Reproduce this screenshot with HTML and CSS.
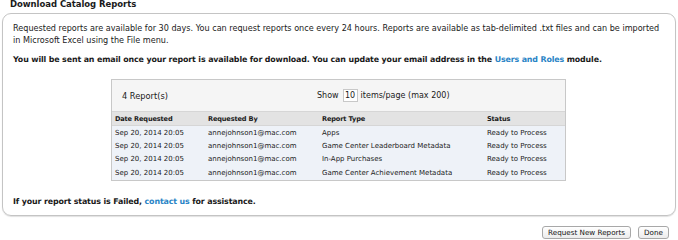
FILE: index.html
```html
<!DOCTYPE html>
<html>
<head>
<meta charset="utf-8">
<link rel="stylesheet" href="styles.css">
</head>
<body>
<h1 class="title">Download Catalog Reports</h1>
<div class="box">
  <p class="intro">Requested reports are available for 30 days. You can request reports once every 24 hours. Reports are available as tab-delimited .txt files and can be imported in Microsoft Excel using the File menu.</p>
  <p class="strong">You will be sent an email once your report is available for download. You can update your email address in the <a class="link" href="#">Users and Roles</a> module.</p>
  <div class="panel">
    <div class="panel-head">
      <span class="count">4 Report(s)</span>
      <span class="pager">Show <span class="input">10</span> items/page (max 200)</span>
    </div>
    <table class="grid">
      <thead>
        <tr><th class="c1">Date Requested</th><th class="c2">Requested By</th><th class="c3">Report Type</th><th class="c4">Status</th></tr>
      </thead>
      <tbody>
        <tr><td>Sep 20, 2014 20:05</td><td>annejohnson1@mac.com</td><td>Apps</td><td>Ready to Process</td></tr>
        <tr><td>Sep 20, 2014 20:05</td><td>annejohnson1@mac.com</td><td>Game Center Leaderboard Metadata</td><td>Ready to Process</td></tr>
        <tr><td>Sep 20, 2014 20:05</td><td>annejohnson1@mac.com</td><td>In-App Purchases</td><td>Ready to Process</td></tr>
        <tr><td>Sep 20, 2014 20:05</td><td>annejohnson1@mac.com</td><td>Game Center Achievement Metadata</td><td>Ready to Process</td></tr>
      </tbody>
    </table>
  </div>
  <p class="strong foot">If your report status is Failed, <a class="link" href="#">contact us</a> for assistance.</p>
</div>
<div class="actions">
  <button class="btn">Request New Reports</button>
  <button class="btn">Done</button>
</div>
</body>
</html>
```
FILE: styles.css
```css
html, body {
  margin: 0;
  padding: 0;
  background: #ffffff;
}
body {
  font-family: "DejaVu Sans", "Liberation Sans", sans-serif;
  font-size: 8.1px;
  color: #1a1a1a;
  width: 678px;
  height: 239px;
  overflow: hidden;
}
.title {
  font-size: 8.5px;
  font-weight: bold;
  letter-spacing: -0.05px;
  margin: 0 0 0 10px;
  line-height: 9px;
  height: 13px;
}
.box {
  margin: 0 2px;
  border: 1px solid #c4c4c4;
  border-radius: 9px;
  box-shadow: 0 1px 1px rgba(0,0,0,0.12);
  padding: 8px 6px 0 10px;
  height: 203px;
  box-sizing: border-box;
}
.intro {
  margin: 0;
  line-height: 12px;
}
.strong {
  font-size: 7.9px;
  font-weight: bold;
  letter-spacing: -0.13px;
  margin: 8px 0 0 0;
  line-height: 12px;
}
.link {
  color: #2a84c6;
  text-decoration: none;
}
.panel {
  width: 455px;
  margin: 13px 0 0 98px;
  border: 1px solid #c8c8c8;
  box-sizing: border-box;
  background: #eef2f8;
}
.panel-head {
  display: flex;
  align-items: center;
  height: 31px;
  background: #f5f5f5;
  padding-left: 10px;
}
.count {
  font-size: 8.25px;
  width: 195px;
}
.pager {
  display: flex;
  align-items: center;
  font-size: 8px;
}
.input {
  display: inline-block;
  width: 13px;
  height: 11px;
  line-height: 11px;
  border: 1px solid #c8c8c8;
  background: #fff;
  text-align: center;
  margin: 0 3px 0 4px;
}
.grid {
  width: 100%;
  border-collapse: collapse;
  table-layout: fixed;
  font-size: 7px;
}
.grid th {
  box-sizing: border-box;
  background: #e3e3e3;
  font-size: 6.6px;
  font-weight: bold;
  letter-spacing: -0.15px;
  text-align: left;
  height: 14px;
  padding: 0 0 0 3px;
  border-top: 1px solid #d6d6d6;
  border-bottom: 1px solid #d6d6d6;
}
.grid td {
  box-sizing: border-box;
  height: 13.6px;
  padding: 0 0 0 3px;
  white-space: nowrap;
  overflow: hidden;
}
.c1 { width: 93px; }
.c2 { width: 114px; }
.c3 { width: 165px; }
.c4 { width: 81px; }
.foot {
  margin-top: 15px;
}
.actions {
  display: flex;
  justify-content: flex-end;
  gap: 7px;
  padding: 10px 9px 0 0;
}
.btn {
  font-family: "DejaVu Sans", "Liberation Sans", sans-serif;
  font-size: 7.2px;
  color: #111;
  height: 13px;
  padding: 0 5px;
  border: 1px solid #a8a8a8;
  border-radius: 3px;
  background: linear-gradient(#ffffff, #ececec);
  line-height: 11px;
}
```
